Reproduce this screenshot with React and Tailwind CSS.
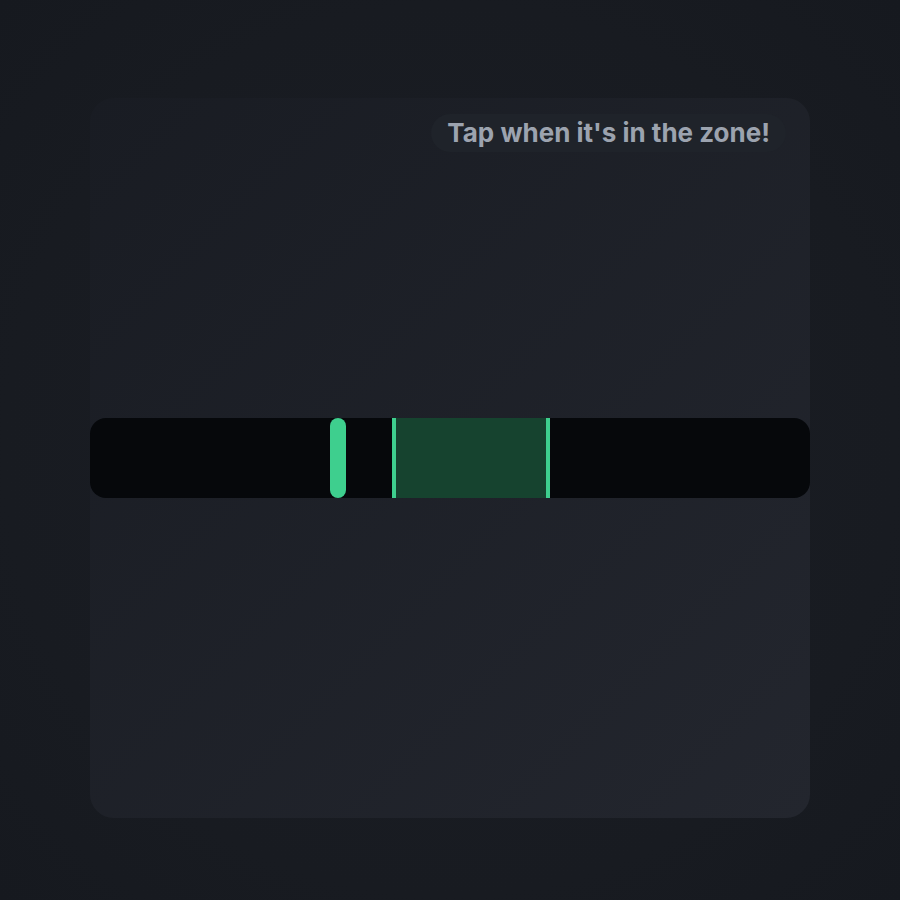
export default function App() {
  return (
    <div
      className="w-[900px] h-[900px] flex items-center justify-center pt-4 bg-[radial-gradient(ellipse_at_center,#1b1e25_0%,#181b21_70%,#16191f_100%)]"
      style={{ fontFamily: 'Inter, "Noto Sans", sans-serif' }}
    >
      <div className="relative w-[720px] h-[720px] rounded-3xl bg-gradient-to-br from-[#191c23] to-[#23262e] flex items-center">
        <div className="absolute top-4 right-6 rounded-full bg-[#1f232a] px-4 py-[3px]">
          <span className="text-[26px] leading-8 font-bold text-[#9ca3af]">Tap when it's in the zone!</span>
        </div>
        <div className="relative w-full h-20 rounded-2xl bg-[#06080b] overflow-hidden">
          <div className="absolute top-0 bottom-0 left-[302px] w-[158px] bg-[#16432f] border-x-4 border-[#3ecf8e]" />
          <div className="absolute top-0 bottom-0 left-[240px] w-4 rounded-full bg-[#3ecf8e]" />
        </div>
      </div>
    </div>
  );
}
